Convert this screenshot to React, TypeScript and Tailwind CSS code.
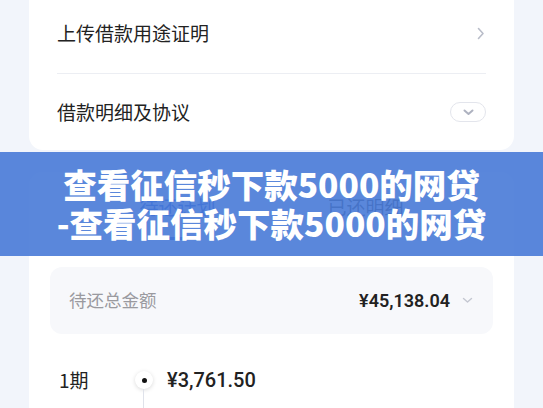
import React from "react";

const cjk = { fontFamily: '"Noto Sans CJK SC", "Noto Sans", sans-serif' };
const num = { fontFamily: 'Roboto, "Noto Sans CJK SC", sans-serif' };

export default function App() {
  return (
    <div className="relative w-[543px] h-[408px] overflow-hidden bg-[#f2f5fb]" style={cjk}>
      <div className="px-[29px]">
        {/* top card */}
        <div className="mt-[-4px] bg-white rounded-b-[14px] px-[28px]">
          <div className="h-[78px] flex items-center justify-between border-b border-[#eceef3] pb-[2px]">
            <span className="text-[19px] text-[#222]">上传借款用途证明</span>
            <svg width="8" height="13" viewBox="0 0 8 13" className="mr-[1px]">
              <path d="M1.5 1.5 L6 6.5 L1.5 11.5" fill="none" stroke="#b9bdc9" strokeWidth="1.6" strokeLinecap="round" strokeLinejoin="round" />
            </svg>
          </div>
          <div className="h-[76px] flex items-center justify-between">
            <span className="text-[19px] text-[#222]">借款明细及协议</span>
            <div className="w-[36px] h-[20px] rounded-full border border-[#e3e5ec] flex items-center justify-center">
              <svg width="11" height="7" viewBox="0 0 11 7">
                <path d="M1.5 1.5 L5.5 5 L9.5 1.5" fill="none" stroke="#aeb2c0" strokeWidth="2" strokeLinecap="round" strokeLinejoin="round" />
              </svg>
            </div>
          </div>
        </div>

        {/* second card */}
        <div className="mt-[22px] bg-white rounded-t-[14px] px-[21px] pt-[24px] h-[300px]">
          <div className="flex justify-center gap-[112px]">
            <div className="flex flex-col items-center">
              <span className="text-[19px] leading-[22px] text-[#1d4fd6]">待还计划</span>
              <div className="mt-[19px] w-[25px] h-[3px] rounded-full bg-[#1d4fd6]" />
            </div>
            <span className="text-[19px] leading-[22px] text-[#333]">已还明细</span>
          </div>
          <div className="mt-[27px] h-[67px] rounded-[12px] bg-[#f7f8fb] pl-[19px] pr-[20px] flex items-center justify-between">
            <span className="text-[17.5px] text-[#9a9a9f]">待还总金额</span>
            <div className="flex items-center gap-[12px]">
              <span className="text-[18px] font-semibold text-[#222]" style={num}>¥45,138.04</span>
              <svg width="11" height="7" viewBox="0 0 11 7">
                <path d="M1.5 1.5 L5.5 5 L9.5 1.5" fill="none" stroke="#c4c7d1" strokeWidth="1.4" strokeLinecap="round" strokeLinejoin="round" />
              </svg>
            </div>
          </div>
          <div className="mt-[34px] flex items-center h-[24px] pl-[9px]">
            <span className="w-[76px] text-[19px] text-[#222]">1期</span>
            <div className="relative w-[18px] h-[18px] rounded-full bg-white shadow-[0_1px_4px_rgba(0,0,0,0.15)] flex items-center justify-center">
              <div className="w-[5px] h-[5px] rounded-full bg-[#111]" />
              <div className="absolute left-[8px] top-[18px] w-px h-[40px] bg-[#dfe2ea]" />
            </div>
            <span className="ml-[14px] text-[20px] font-medium text-[#222]" style={num}>¥3,761.50</span>
          </div>
          <div className="mt-[12px] flex items-center pl-[8px] text-[14px] text-[#aaa]">
            <span className="w-[110px]" style={num}>2024/12/23</span>
            <span className="w-[190px]">本金 ¥3,000.00</span>
            <span>利息 ¥761.50</span>
          </div>
        </div>
      </div>

      {/* overlay banner */}
      <div className="absolute left-0 right-0 top-[152px] h-[104px] bg-[rgba(72,122,215,0.9)] flex flex-col items-center justify-center pb-[2px]">
        <div className="text-white text-[33.5px] font-black leading-[39px] text-center whitespace-nowrap">查看征信秒下款5000的网贷</div>
        <div className="text-white text-[33.5px] font-black leading-[39px] text-center whitespace-nowrap">-查看征信秒下款5000的网贷</div>
      </div>
    </div>
  );
}
